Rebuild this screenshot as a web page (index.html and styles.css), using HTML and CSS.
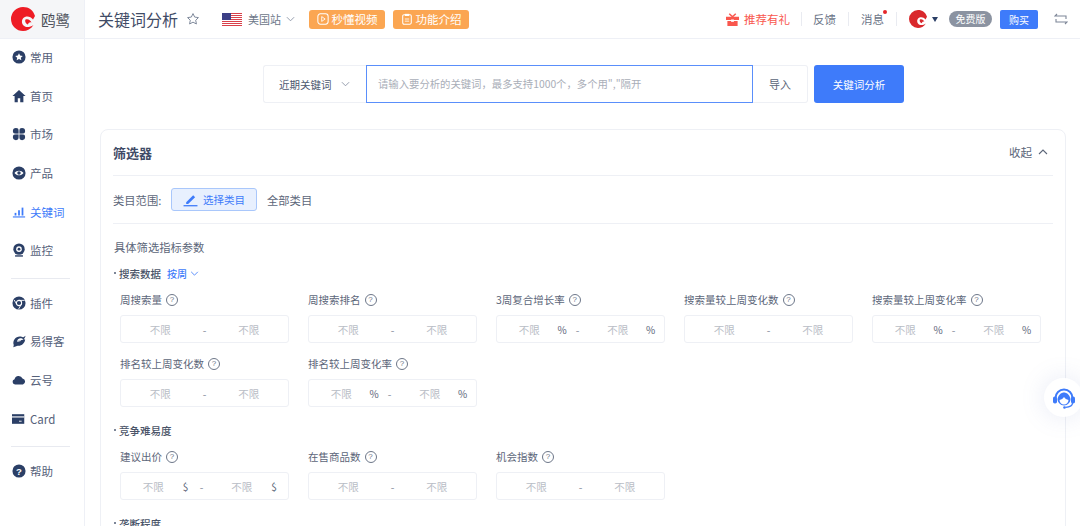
FILE: index.html
```html
<!DOCTYPE html>
<html lang="zh">
<head>
<meta charset="utf-8">
<title>关键词分析</title>
<link rel="stylesheet" href="styles.css">
</head>
<body>
<div class="app">
  <aside class="side">
    <div class="logo">
      <svg class="logo-mark" viewBox="0 0 24 24"><path d="M12 0C18 0 22 3 24 9L22 12.500C20 10 17 9 14 10C11 11 10 15 12 18C14 20.500 18 21 22.500 18C20 22 16 24 12 24A12 12 0 0 1 12 0z" fill="#ee1c25"/><path d="M14.500 12.500C17 11.500 19.500 13 20.500 15.500C19 15 17.500 15.500 17 17.500C15 17 13.500 14.500 14.500 12.500z" fill="#ee1c25"/></svg>
      <span class="logo-text">鸥鹭</span>
    </div>
    <nav class="nav">
      <a class="nav-item"><svg viewBox="0 0 16 16"><circle cx="8" cy="8" r="7.500" fill="#2b3f66"/><path d="M8 3.600l1.300 2.800 3 .4-2.200 2 .6 3L8 10.300l-2.700 1.500.6-3-2.200-2 3-.4z" fill="#fff"/></svg>常用</a>
      <a class="nav-item"><svg viewBox="0 0 16 16"><path d="M8 1L.5 8H3v7h3.600v-4.500h2.800V15H13V8h2.500z" fill="#2b3f66"/></svg>首页</a>
      <a class="nav-item"><svg viewBox="0 0 16 16"><g fill="#2b3f66"><path d="M1 4.500a3.500 3.500 0 0 1 7 0V8H4.500A3.500 3.500 0 0 1 1 4.500z"/><path d="M15 4.500a3.500 3.500 0 0 0-7 0V8h3.500A3.500 3.500 0 0 0 15 4.500z"/><path d="M1 11.500a3.500 3.500 0 0 0 7 0V8H4.500A3.500 3.500 0 0 0 1 11.500z"/><path d="M15 11.500a3.500 3.500 0 0 1-7 0V8h3.500a3.500 3.500 0 0 1 3.500 3.500z"/></g><path d="M0 8h16M8 0v16" stroke="#fff" stroke-width=".9"/></svg>市场</a>
      <a class="nav-item"><svg viewBox="0 0 16 16"><circle cx="8" cy="8" r="7.500" fill="#2b3f66"/><path d="M2.800 8c2.800-3.600 7.600-3.600 10.400 0-2.800 3.600-7.600 3.600-10.400 0z" fill="#fff"/><circle cx="8" cy="8" r="2" fill="#2b3f66"/></svg>产品</a>
      <a class="nav-item active"><svg viewBox="0 0 16 16"><g fill="#3e7bfa"><rect x="3" y="9" width="2" height="3"/><rect x="7" y="6" width="2" height="6"/><rect x="11" y="3" width="2" height="9"/><rect x="1" y="13" width="14" height="1.300"/></g></svg>关键词</a>
      <a class="nav-item"><svg viewBox="0 0 16 16"><circle cx="8" cy="7" r="6.500" fill="#2b3f66"/><circle cx="8" cy="7" r="3.200" fill="#fff"/><circle cx="8" cy="7" r="1.600" fill="#2b3f66"/><rect x="3.500" y="14" width="9" height="1.600" fill="#2b3f66"/></svg>监控</a>
      <div class="nav-div first"></div>
      <a class="nav-item"><svg viewBox="0 0 16 16"><circle cx="8" cy="8" r="7.500" fill="#2b3f66"/><circle cx="8" cy="8" r="3" fill="none" stroke="#fff" stroke-width="1.200"/><path d="M8 5h6.500M5.400 9.500L2.500 4.500M10.600 9.500L7.500 15" stroke="#fff" stroke-width="1"/></svg>插件</a>
      <a class="nav-item"><svg viewBox="0 0 16 16"><path d="M2 12.500C0 7 5 1.500 11 3c1 .3 2 .8 2 .8L15.500 2c-.5 2-1.500 3.500-2.500 4.500C12 5 10 4.500 8.500 5 6.500 5.700 6 7 6 8l6.500-1.500L15 6c0 4-4 8-8.500 7.500L1.500 15z" fill="#2b3f66"/><path d="M6 8.500l4-1" stroke="#fff"/></svg>易得客</a>
      <a class="nav-item"><svg viewBox="0 0 16 16"><path d="M3.500 13a3 3 0 0 1-.6-5.900A4.800 4.800 0 0 1 12 6.200 3.500 3.500 0 0 1 12.500 13z" fill="#2b3f66"/></svg>云号</a>
      <a class="nav-item"><svg viewBox="0 0 16 16"><path d="M0 2.500h14v11H0z" fill="#2b3f66"/><rect x="0" y="5" width="14" height="1.300" fill="#fff"/><rect x="8" y="10" width="3" height="1" fill="#fff"/></svg>Card</a>
      <div class="nav-div second"></div>
      <a class="nav-item"><svg viewBox="0 0 16 16"><circle cx="8" cy="8" r="7.500" fill="#2b3f66"/><text class="help-q" x="8" y="12" text-anchor="middle">?</text></svg>帮助</a>
    </nav>
  </aside>

  <div class="main">
    <header class="top">
      <h1 class="title">关键词分析</h1>
      <svg class="star" viewBox="0 0 16 16"><path d="M8 1.800l1.900 4 4.300.6-3.100 3 .8 4.300L8 11.600l-3.900 2.100.8-4.300-3.100-3 4.300-.6z" fill="none" stroke="#7b8598" stroke-width="1.100"/></svg>
      <svg class="flag" viewBox="0 0 20 13"><rect width="20" height="13" fill="#fff"/><g fill="#d9404a"><rect width="20" height="1"/><rect y="2" width="20" height="1"/><rect y="4" width="20" height="1"/><rect y="6" width="20" height="1"/><rect y="8" width="20" height="1"/><rect y="10" width="20" height="1"/><rect y="12" width="20" height="1"/></g><rect width="9" height="7" fill="#3c3f86"/></svg>
      <span class="site">美国站</span>
      <svg class="chev site-chev" viewBox="0 0 10 6"><path d="M1 1l4 4 4-4" fill="none" stroke="#8a93a5"/></svg>
      <a class="tag video"><svg viewBox="0 0 14 14"><rect x="1" y="1" width="12" height="12" rx="3" fill="none" stroke="#fff" stroke-width="1.200"/><path d="M5.500 4.200l4 2.800-4 2.800z" fill="none" stroke="#fff"/></svg>秒懂视频</a>
      <a class="tag intro"><svg viewBox="0 0 14 14"><rect x="2" y="2" width="10" height="11" rx="1.500" fill="none" stroke="#fff" stroke-width="1.200"/><rect x="4.500" y="1" width="5" height="2.500" fill="#fff"/><path d="M4.500 7h5M4.500 9.500h5" stroke="#fff"/></svg>功能介绍</a>
      <div class="top-right">
        <a class="gift"><svg viewBox="0 0 14 14"><path d="M0 4h14v3.500H0zM1.500 8.500h11V14h-11z" fill="#f9574e"/><path d="M3.500 .8L7 4l3.500-3.200" fill="none" stroke="#f9574e" stroke-width="1.600"/><rect x="5.500" y="7" width="3" height="2.500" fill="#fff"/></svg>推荐有礼</a>
        <span class="sep sep-gift"></span>
        <a class="link">反馈</a>
        <span class="sep"></span>
        <a class="link msg">消息<i class="dot"></i></a>
        <span class="sep"></span>
        <svg class="avatar" viewBox="0 0 24 24"><path d="M12 0C18 0 22 3 24 9L22 12.500C20 10 17 9 14 10C11 11 10 15 12 18C14 20.500 18 21 22.500 18C20 22 16 24 12 24A12 12 0 0 1 12 0z" fill="#d9282c"/><path d="M14.500 12.500C17 11.500 19.500 13 20.500 15.500C19 15 17.500 15.500 17 17.500C15 17 13.500 14.500 14.500 12.500z" fill="#d9282c"/></svg>
        <span class="caret"></span>
        <span class="free">免费版</span>
        <a class="buy">购买</a>
        <svg class="swap" viewBox="0 0 14 12"><path d="M3 1L1 3h11v3M11 11l2-2H2V6" fill="none" stroke="#7d8697" stroke-width="1.100"/></svg>
      </div>
    </header>

    <div class="content">
      <div class="search">
        <div class="recent">近期关键词<svg class="chev" viewBox="0 0 10 6"><path d="M1 1l4 4 4-4" fill="none" stroke="#8a93a5"/></svg></div>
        <div class="kw-input">请输入要分析的关键词，最多支持1000个，多个用","隔开</div>
        <a class="import">导入</a>
        <a class="go">关键词分析</a>
      </div>

      <section class="card">
        <div class="card-head">
          <h2>筛选器</h2>
          <span class="collapse">收起<svg viewBox="0 0 10 6"><path d="M1 5l4-4 4 4" fill="none" stroke="#5c6679" stroke-width="1.100"/></svg></span>
        </div>
        <div class="cat-row">
          <span class="cat-label">类目范围:</span>
          <a class="cat-btn"><svg viewBox="0 0 14 14"><path d="M3 9.500L9.500 3l1.800 1.800L4.800 11.300H3z" fill="#3e7bfa"/><path d="M.5 12.800h13" stroke="#3e7bfa" stroke-width="1.200"/></svg>选择类目</a>
          <span class="cat-all">全部类目</span>
        </div>
        <div class="params-title">具体筛选指标参数</div>

        <div class="group-title first-group"><span class="bul"></span>搜索数据<a class="weekly">按周<svg viewBox="0 0 10 6"><path d="M1 1l4 4 4-4" fill="none" stroke="#3e7bfa"/></svg></a></div>
        <div class="grid">
          <div class="field"><label>周搜索量<i class="q">?</i></label><div class="range"><span>不限</span><em>-</em><span>不限</span></div></div>
          <div class="field"><label>周搜索排名<i class="q">?</i></label><div class="range"><span>不限</span><em>-</em><span>不限</span></div></div>
          <div class="field"><label>3周复合增长率<i class="q">?</i></label><div class="range unit"><span>不限</span><b>%</b><em>-</em><span>不限</span><b>%</b></div></div>
          <div class="field"><label>搜索量较上周变化数<i class="q">?</i></label><div class="range"><span>不限</span><em>-</em><span>不限</span></div></div>
          <div class="field"><label>搜索量较上周变化率<i class="q">?</i></label><div class="range unit"><span>不限</span><b>%</b><em>-</em><span>不限</span><b>%</b></div></div>
          <div class="field"><label>排名较上周变化数<i class="q">?</i></label><div class="range"><span>不限</span><em>-</em><span>不限</span></div></div>
          <div class="field"><label>排名较上周变化率<i class="q">?</i></label><div class="range unit"><span>不限</span><b>%</b><em>-</em><span>不限</span><b>%</b></div></div>
        </div>

        <div class="group-title"><span class="bul"></span>竞争难易度</div>
        <div class="grid">
          <div class="field"><label>建议出价<i class="q">?</i></label><div class="range unit"><span>不限</span><b>$</b><em>-</em><span>不限</span><b>$</b></div></div>
          <div class="field"><label>在售商品数<i class="q">?</i></label><div class="range"><span>不限</span><em>-</em><span>不限</span></div></div>
          <div class="field"><label>机会指数<i class="q">?</i></label><div class="range"><span>不限</span><em>-</em><span>不限</span></div></div>
        </div>

        <div class="group-title"><span class="bul"></span>垄断程度</div>
      </section>
    </div>
  </div>
</div>

<div class="support">
  <svg viewBox="0 0 24 24"><path d="M3.500 12a8.500 8.500 0 0 1 17 0" fill="none" stroke="#3e7bfa" stroke-width="2"/><rect x="1" y="10.500" width="4" height="7" rx="1.800" fill="#3e7bfa"/><rect x="19" y="10.500" width="4" height="7" rx="1.800" fill="#3e7bfa"/><path d="M5.500 13c1-4.500 4-6.500 6.500-6.500s5.500 2 6.500 6.500c0 3.500-3 6.500-6.500 6.500s-6.500-3-6.500-6.500z" fill="#3e7bfa"/><path d="M7.500 14c2-.5 3.500-1.500 4.500-3 1 1.500 2.500 2.500 4.500 3 0 2.500-2 4.500-4.500 4.500s-4.500-2-4.500-4.500z" fill="#fff"/><path d="M20.500 17c0 2.800-3 4-7 4.300" fill="none" stroke="#3e7bfa" stroke-width="1.300"/><circle cx="12.500" cy="21.500" r="1.300" fill="#3e7bfa"/></svg>
</div>
</body>
</html>
```
FILE: styles.css
```css
* { box-sizing: border-box; }
html, body { margin: 0; height: 526px; overflow: hidden; background: #fff; }
body {
  font-family: "Noto Sans CJK SC", "Noto Sans", sans-serif;
  color: #4d5870;
  font-size: 12px;
}
a { color: inherit; text-decoration: none; }
h1, h2 { margin: 0; font-weight: 400; }
i, em, b { font-style: normal; font-weight: 400; }

.app { display: flex; height: 526px; }

/* sidebar */
.side { width: 85px; flex: none; border-right: 1px solid #eef0f6; }
.logo { height: 39px; background: #f5f6f8; border-bottom: 1px solid #eef0f6; display: flex; align-items: center; padding-left: 11px; gap: 6px; }
.logo-mark { width: 24px; height: 24px; }
.logo-text { font-size: 14.500px; color: #4a4f58; }
.nav { display: flex; flex-direction: column; margin-top: -1px; }
.nav-item { height: 38.600px; flex: none; display: flex; align-items: center; gap: 4px; padding-left: 12px; font-size: 11.500px; color: #56617a; }
.nav-item svg { width: 14px; height: 14px; flex: none; }
.nav-item.active { color: #3e7bfa; }
.nav-div { height: 1px; flex: none; background: #e8eaf0; margin: 8px 14px 5px 11px; }
.help-q { font: 700 11px "Liberation Sans", sans-serif; fill: #fff; }

/* top bar */
.main { flex: 1; min-width: 0; display: flex; flex-direction: column; }
.top { height: 39px; flex: none; border-bottom: 1px solid #eef0f6; display: flex; align-items: center; padding-left: 13px; }
.title { font-size: 16px; color: #3f4b66; line-height: 24px; }
.star { width: 14px; height: 14px; margin-left: 8px; }
.flag { width: 20px; height: 13px; margin-left: 22px; }
.site { font-size: 11px; color: #6d7789; margin-left: 6px; }
.site-chev { width: 9px; height: 6px; margin-left: 5px; }
.tag { height: 19px; width: 76px; border-radius: 3px; background: #fba652; color: #fff; display: flex; align-items: center; justify-content: center; gap: 3px; font-size: 11.500px; }
.tag svg { width: 12px; height: 12px; }
.video { margin-left: 14px; }
.intro { margin-left: 8px; }
.top-right { margin-left: auto; display: flex; align-items: center; padding-right: 12px; }
.gift { color: #f9574e; font-size: 11.500px; display: flex; align-items: center; gap: 5px; }
.gift svg { width: 13px; height: 13px; }
.sep { width: 1px; height: 14px; background: #e9ebf1; margin: 0 12px; }
.sep-gift { margin: 0 11px; }
.link { color: #6b7487; font-size: 11.500px; }
.msg { position: relative; }
.dot { position: absolute; top: -1px; right: -3px; width: 4px; height: 4px; border-radius: 50%; background: #e5262a; }
.avatar { width: 18px; height: 18px; }
.caret { width: 0; height: 0; border-left: 3.500px solid transparent; border-right: 3.500px solid transparent; border-top: 5px solid #2b3f66; margin-left: 5px; }
.free { width: 43px; height: 16px; border-radius: 8px; background: #8b93a1; color: #fff; font-size: 10px; line-height: 16px; text-align: center; margin-left: 11px; }
.buy { width: 38px; height: 19px; border-radius: 2px; background: #3e7bfa; color: #fff; font-size: 10px; line-height: 19px; text-align: center; margin-left: 8px; }
.swap { width: 14px; height: 12px; margin-left: 16px; }

/* search */
.content { flex: 1; min-height: 0; padding: 26px 14px 0 15px; }
.search { display: flex; justify-content: center; height: 38px; padding-left: 1px; }
.recent { width: 103px; border: 1px solid #eef0f5; border-right: 0; border-radius: 3px 0 0 3px; display: flex; align-items: center; gap: 9px; padding-left: 15px; font-size: 10.500px; color: #4d5870; }
.chev { width: 9px; height: 6px; flex: none; }
.kw-input { width: 387px; border: 1px solid #5a8ffb; font-size: 10.350px; color: #a9aeb8; line-height: 36px; padding-left: 11px; }
.import { width: 55px; border: 1px solid #eef0f5; border-left: 0; border-radius: 0 3px 3px 0; font-size: 11px; color: #5a6478; display: flex; align-items: center; justify-content: center; }
.go { width: 90px; margin-left: 6px; background: #3e7bfa; color: #fff; border-radius: 3px; font-size: 10.500px; display: flex; align-items: center; justify-content: center; }

/* filter card */
.card { margin-top: 26px; border: 1px solid #eef0f5; border-radius: 8px; padding: 0 12px 0 12px; height: 420px; }
.card-head { height: 46px; padding-bottom: 1px; display: flex; align-items: center; justify-content: space-between; border-bottom: 1px solid #eef0f5; }
.card-head h2 { font-size: 13px; font-weight: 700; color: #3f4b66; }
.collapse { display: flex; align-items: center; gap: 6px; color: #5c6679; font-size: 11.500px; }
.collapse svg { width: 10px; height: 6px; margin-right: 5px; }
.cat-row { height: 48px; display: flex; align-items: center; border-bottom: 1px solid #eef0f5; }
.cat-label { width: 58px; font-size: 11.300px; color: #5c6679; }
.cat-btn { width: 86px; height: 23px; border: 1px solid #a9c7fb; border-radius: 3px; background: #e8f0fe; color: #3e7bfa; font-size: 10.500px; display: flex; align-items: center; justify-content: center; gap: 5px; }
.cat-btn svg { width: 15px; height: 15px; }
.cat-all { margin-left: 10px; font-size: 11.300px; color: #5c6679; }
.params-title { margin-top: 14px; padding-left: 1px; height: 18px; line-height: 18px; font-size: 11.300px; color: #5c6679; }
.group-title { display: flex; align-items: center; height: 18px; margin-top: 14px; font-size: 10.500px; font-weight: 500; color: #4a5468; }
.group-title.first-group { margin-top: 8px; }
.bul { width: 2px; height: 2px; background: #7d8697; margin: 0 3px 0 1px; flex: none; }
.weekly { margin-left: 6px; color: #3e7bfa; font-size: 10px; display: flex; align-items: center; gap: 3px; }
.weekly svg { width: 9px; height: 5px; }
.grid { display: grid; grid-template-columns: repeat(5, 169px); column-gap: 19px; row-gap: 13px; padding-left: 7px; margin-top: 10px; }
.field label { display: flex; align-items: center; height: 15px; font-size: 10.500px; color: #5c6679; }
.q { width: 12px; height: 12px; margin-left: 4px; border: 1px solid #6d7789; border-radius: 50%; font: 8px/10px "Liberation Sans", sans-serif; text-align: center; color: #6d7789; }
.range { margin-top: 8px; height: 28px; border: 1px solid #eef0f5; border-radius: 3px; display: flex; align-items: center; font-size: 10.500px; color: #b9bdc6; padding: 0 7px; }
.range.unit { padding: 0 10px 0 4px; }
.range span { flex: 1; text-align: center; }
.range em { width: 8px; text-align: center; color: #888f9e; margin: 0 8px; }
.range b { width: 8px; color: #5c6679; font-size: 10px; text-align: center; }

.support { position: absolute; left: 1044px; top: 378px; width: 39px; height: 39px; border-radius: 50%; background: #fff; box-shadow: 0 0 24px rgba(120, 140, 200, .18); display: flex; align-items: center; justify-content: center; }
.support svg { width: 24px; height: 24px; }
```
